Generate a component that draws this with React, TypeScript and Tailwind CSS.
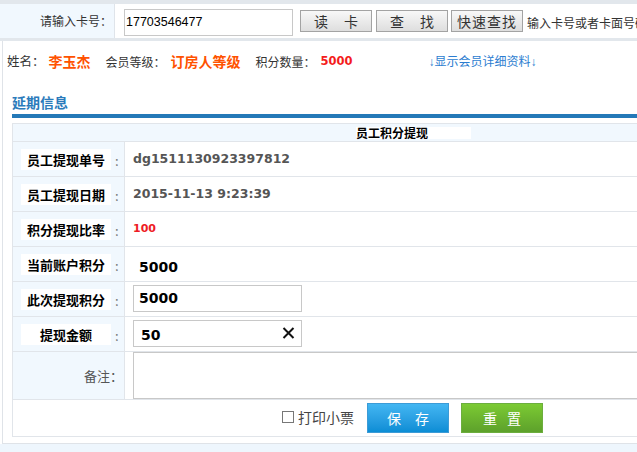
import React from "react";

const num = "font-['DejaVu_Sans',sans-serif] font-bold";

function Label({ text }: { text: string }) {
  return (
    <div className="w-[112px] shrink-0 border-r border-[#e1e5ea] bg-[#f1f8fe] flex items-center pl-[8px]">
      <div className="w-[90px] h-[21px] leading-[21px] bg-white text-center font-bold text-[13px] text-black">{text}</div>
      <span className="ml-[4px] mt-[3px] text-[13px] text-[#777]">:</span>
    </div>
  );
}

function Row({ label, children }: { label: string; children: React.ReactNode }) {
  return (
    <div className="flex h-[35px] border-b border-[#e1e5ea]">
      <Label text={label} />
      <div className="flex-1 pl-[8px] flex items-center">{children}</div>
    </div>
  );
}

export default function App() {
  return (
    <div className="w-[637px] h-[452px] overflow-hidden bg-[#eef6fd] font-['Noto_Sans_CJK_SC',sans-serif] text-[12px] text-[#333]">
      <div className="w-[760px] bg-white">
        {/* top search row */}
        <div className="flex h-[41px] border-t-[4px] border-b-[3px] border-[#e2e7ec]">
          <div className="w-[115px] shrink-0 bg-[#f1f8fe] border-r border-[#dfe4ea] flex items-center justify-end pr-[2px] text-[12px] text-[#333]">
            请输入卡号：
          </div>
          <div className="flex items-start pl-[9px]">
            <div className="mt-[5px] w-[169px] h-[27px] border border-[#c8c8c8] bg-white pl-[1px] flex items-center font-['Liberation_Sans',sans-serif] text-[12.5px] text-black">
              17703546477
            </div>
            <div className="mt-[6px] ml-[7px] w-[72px] h-[22px] border border-[#a3a3a3] bg-gradient-to-b from-[#f8f8f8] to-[#dedede] flex items-center justify-center gap-[16px] text-[14px] text-[#333]">
              <span>读</span>
              <span>卡</span>
            </div>
            <div className="mt-[6px] ml-[4px] w-[72px] h-[22px] border border-[#a3a3a3] bg-gradient-to-b from-[#f8f8f8] to-[#dedede] flex items-center justify-center gap-[16px] text-[14px] text-[#333]">
              <span>查</span>
              <span>找</span>
            </div>
            <div className="mt-[6px] ml-[3px] w-[72px] h-[22px] border border-[#a3a3a3] bg-gradient-to-b from-[#f8f8f8] to-[#dedede] flex items-center justify-center tracking-[1px] text-[14px] text-[#333]">
              快速查找
            </div>
            <div className="mt-[11px] ml-[4px] whitespace-nowrap text-[12px] text-[#333] leading-[16px]">
              输入卡号或者卡面号码
            </div>
          </div>
        </div>

        {/* lower box */}
        <div className="ml-[2px] h-[403px] border-l border-b border-[#dfe3e8]">
          {/* info row */}
          <div className="h-[41px] flex items-center pl-[4px] whitespace-nowrap">
            <span className="text-[12.5px] text-[#333]">姓名：</span>
            <span className="ml-[4px] text-[14px] font-bold text-[#ff5200]">李玉杰</span>
            <span className="ml-[15px] text-[12px] text-[#333]">会员等级：</span>
            <span className="ml-[5px] text-[14px] font-bold text-[#ff5200]">订房人等级</span>
            <span className="ml-[15px] text-[12px] text-[#333]">积分数量：</span>
            <span className={`ml-[5px] text-[11.5px] text-[#f41c1c] ${num}`}>5000</span>
            <span className="ml-[76px] text-[12px] text-[#2c7dd0]">
              <span className="font-['Liberation_Sans',sans-serif]">↓</span>显示会员详细资料<span className="font-['Liberation_Sans',sans-serif]">↓</span>
            </span>
          </div>

          {/* title */}
          <div className="h-[32px] pt-[10px] pl-[9px] leading-[20px] text-[14px] font-bold text-[#2b7bbb]">延期信息</div>
          <div className="ml-[9px] h-[4px] bg-[#2479b8]"></div>

          {/* table */}
          <div className="ml-[9px] mt-[5px] border border-[#e1e5ea]">
            <div className="h-[18px] border-b border-[#e1e5ea] bg-[#f1f8fe] flex items-center">
              <div className="ml-[343px] w-[115px] h-[12px] leading-[12px] bg-white text-[12px] font-bold text-black">员工积分提现</div>
            </div>

            <Row label="员工提现单号">
              <span className={`text-[12.5px] text-[#555] ${num}`}>dg1511130923397812</span>
            </Row>
            <Row label="员工提现日期">
              <span className={`text-[12.5px] text-[#555] ${num}`}>2015-11-13 9:23:39</span>
            </Row>
            <Row label="积分提现比率">
              <span className={`text-[11px] text-[#ee1c25] ${num}`}>100</span>
            </Row>
            <Row label="当前账户积分">
              <span className={`mt-[7px] pl-[6px] text-[14px] text-black ${num}`}>5000</span>
            </Row>
            <div className="flex h-[35px] border-b border-[#e1e5ea]">
              <Label text="此次提现积分" />
              <div className="flex-1 pl-[8px] pt-[3px]">
                <div className={`w-[169px] h-[27px] border border-[#c8c8c8] bg-white pl-[5px] flex items-center text-[14px] text-black ${num}`}>5000</div>
              </div>
            </div>
            <div className="flex h-[35px] border-b border-[#e1e5ea]">
              <Label text="提现金额" />
              <div className="flex-1 pl-[8px] pt-[3px]">
                <div className={`w-[169px] h-[27px] border border-[#c8c8c8] bg-white pl-[7px] pr-[6px] flex items-center justify-between text-[14px] text-black ${num}`}>
                  <span className="mt-[3px]">50</span>
                  <svg width="13" height="12" viewBox="0 0 13 12" className="mt-[-2px]">
                    <path d="M1.5 1 L11.5 11 M11.5 1 L1.5 11" stroke="#111" strokeWidth="2" />
                  </svg>
                </div>
              </div>
            </div>
            <div className="flex h-[48px] border-b border-[#e1e5ea]">
              <div className="w-[112px] shrink-0 border-r border-[#e1e5ea] bg-[#f1f8fe] flex items-center justify-end pr-[1px] text-[13px] text-[#555]">
                备注：
              </div>
              <div className="flex-1 pl-[8px]">
                <div className="w-[600px] h-[47px] border border-[#c8c8c8] bg-white"></div>
              </div>
            </div>
            <div className="h-[36px] flex items-start pl-[269px]">
              <div className="mt-[11px] w-[12px] h-[12px] border border-[#777] bg-white"></div>
              <span className="mt-[8px] ml-[4px] text-[14px] leading-[18px] text-[#444]">打印小票</span>
              <div className="mt-[3px] ml-[13px] w-[82px] h-[30px] border border-[#3c9bd6] bg-gradient-to-b from-[#42b6f2] to-[#0a8dd5] flex items-center justify-center gap-[14px] text-[14px] text-white">
                <span>保</span>
                <span>存</span>
              </div>
              <div className="mt-[3px] ml-[12px] w-[82px] h-[30px] border border-[#6cae3e] bg-gradient-to-b from-[#7cca33] to-[#5da12b] flex items-center justify-center gap-[10px] text-[14px] text-white">
                <span>重</span>
                <span>置</span>
              </div>
            </div>
          </div>
        </div>
      </div>
    </div>
  );
}
